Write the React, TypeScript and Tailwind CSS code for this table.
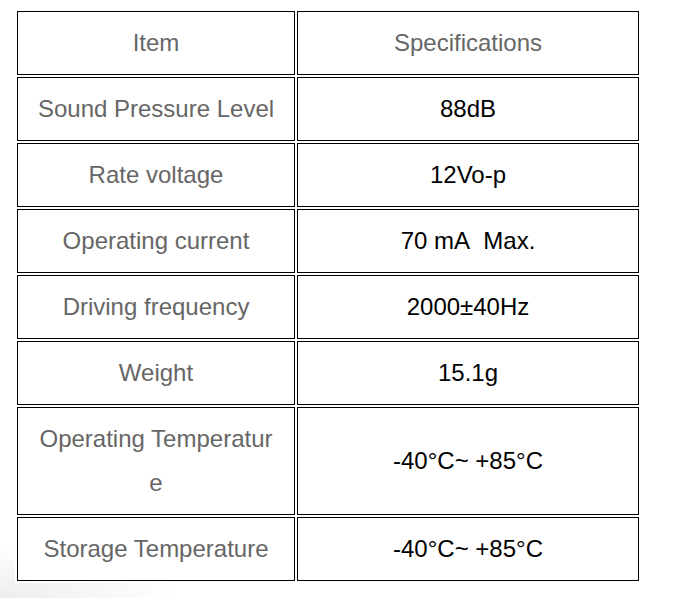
const rows: { item: string; spec: string }[] = [
  { item: "Sound Pressure Level", spec: "88dB" },
  { item: "Rate voltage", spec: "12Vo-p" },
  { item: "Operating current", spec: "70 mA\u00a0 Max." },
  { item: "Driving frequency", spec: "2000±40Hz" },
  { item: "Weight", spec: "15.1g" },
  { item: "Operating Temperature", spec: "-40°C~ +85°C" },
  { item: "Storage Temperature", spec: "-40°C~ +85°C" },
]

const cell =
  "border border-black px-[16px] py-[9px] text-center align-middle leading-[44px] [word-break:break-all]"

export default function App() {
  return (
    <div className="min-h-[598px] w-[684px] bg-white bg-[radial-gradient(ellipse_180px_50px_at_0_100%,#ededed,#ffffff)] pl-[15px] pt-[9px] font-['Liberation_Sans',Arial,Helvetica,sans-serif] text-[24px]">
      <table className="border-separate border-spacing-[2px] bg-white">
        <thead>
          <tr>
            <th className={`${cell} w-[278px] font-normal text-[#666]`}>Item</th>
            <th className={`${cell} w-[342px] font-normal text-[#666]`}>Specifications</th>
          </tr>
        </thead>
        <tbody>
          {rows.map((row) => (
            <tr key={row.item}>
              <td className={`${cell} w-[278px] text-[#666]`}>{row.item}</td>
              <td className={`${cell} w-[342px] text-black`}>{row.spec}</td>
            </tr>
          ))}
        </tbody>
      </table>
    </div>
  )
}
